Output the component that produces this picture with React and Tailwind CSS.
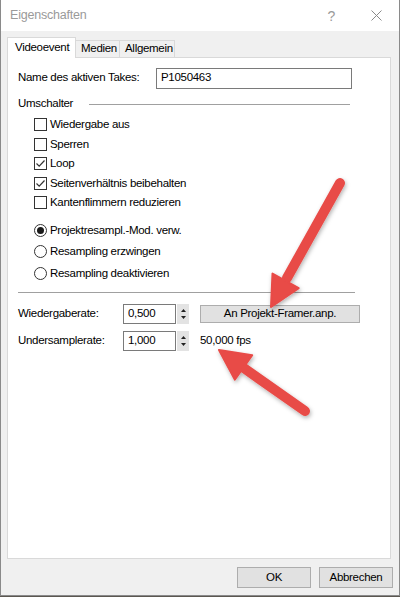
import React from "react";

const Checkbox = ({ checked, label }) => {
    return (
        <div className="h-[19.5px] flex items-center pl-[16px]">
            <div className="w-[13px] h-[13px] border border-[#333] bg-white flex items-center justify-center">
                {checked && (
                    <svg width="11" height="11" viewBox="0 0 11 11">
                        <path d="M1.5 5.5 L4.2 8.2 L9.5 2.5" fill="none" stroke="#333" strokeWidth="1.2" />
                    </svg>
                )}
            </div>
            <span className="ml-[3px]">{label}</span>
        </div>
    )
}

const Radio = ({ checked, label }) => {
    return (
        <div className="h-[21.5px] flex items-center pl-[16px]">
            <div className="w-[13px] h-[13px] rounded-full border border-[#333] bg-white flex items-center justify-center">
                {checked && <div className="w-[7px] h-[7px] rounded-full bg-[#1a1a1a]"></div>}
            </div>
            <span className="ml-[3px]">{label}</span>
        </div>
    )
}

const Spinner = ({ value }) => {
    return (
        <div className="flex h-[20px]">
            <div className="w-[53px] h-[20px] border border-[#7a7a7a] bg-white flex items-center pl-[4px]">{value}</div>
            <div className="w-[12px] h-[20px] ml-[1px] bg-[#e3e3e3] flex flex-col items-center justify-around py-[3px]">
                <svg width="5" height="3" viewBox="0 0 5 3"><path d="M0 3 L2.5 0 L5 3 Z" fill="#222" /></svg>
                <svg width="5" height="3" viewBox="0 0 5 3"><path d="M0 0 L2.5 3 L5 0 Z" fill="#222" /></svg>
            </div>
        </div>
    )
}

const App = () => {
    let toggles = [
        { label: "Wiedergabe aus", checked: false },
        { label: "Sperren", checked: false },
        { label: "Loop", checked: true },
        { label: "Seitenverhältnis beibehalten", checked: true },
        { label: "Kantenflimmern reduzieren", checked: false },
    ];
    let modes = [
        { label: "Projektresampl.-Mod. verw.", checked: true },
        { label: "Resampling erzwingen", checked: false },
        { label: "Resampling deaktivieren", checked: false },
    ];

    return (
        <div className="w-[400px] h-[597px] bg-[#5b5750] font-['Liberation_Sans',sans-serif] text-[11.5px] tracking-[-0.3px] text-black leading-none">
            <div className="relative w-[400px] h-[596px] bg-[#f0f0f0] border-x border-b border-[#8a8a8a] flex flex-col">

                {/* title bar */}
                <div className="h-[31px] bg-white flex items-center pl-[9px] shrink-0">
                    <span className="text-[#9a9a9a] text-[12.5px] tracking-[-0.2px]">Eigenschaften</span>
                    <span className="ml-auto mr-[36px] text-[#9a9a9a] text-[14px]">?</span>
                    <svg className="mr-[17px]" width="11" height="11" viewBox="0 0 11 11">
                        <path d="M0.5 0.5 L10.5 10.5 M10.5 0.5 L0.5 10.5" stroke="#8a8a8a" strokeWidth="1" />
                    </svg>
                </div>

                {/* tabs */}
                <div className="flex items-end ml-[6px] mt-[6px] h-[20px] relative z-10">
                    <div className="h-[21px] w-[69px] bg-white border-x border-t border-[#d9d9d9] flex items-center pl-[7px] mb-[-1px]">Videoevent</div>
                    <div className="h-[17px] w-[44px] border-t border-r border-[#d9d9d9] flex items-center pl-[5px]">Medien</div>
                    <div className="h-[17px] w-[55px] border-t border-r border-[#d9d9d9] flex items-center pl-[5px]">Allgemein</div>
                </div>

                {/* tab panel */}
                <div className="ml-[6px] w-[384px] h-[502px] bg-white border border-[#d9d9d9] pl-[10px]">
                    <div className="flex items-center h-[20px] mt-[10px]">
                        <span>Name des aktiven Takes:</span>
                        <div className="ml-auto mr-[38px] w-[196px] h-[21px] border border-[#7a7a7a] flex items-center pl-[4px]">P1050463</div>
                    </div>

                    <div className="flex items-center h-[16px] mt-[8px]">
                        <span>Umschalter</span>
                        <div className="ml-auto mr-[40px] w-[261px] h-px bg-[#a0a0a0]"></div>
                    </div>

                    <div className="mt-[3px]">
                        {toggles.map((t, i) => <Checkbox key={i} label={t.label} checked={t.checked} />)}
                    </div>

                    <div className="mt-[7px]">
                        {modes.map((m, i) => <Radio key={i} label={m.label} checked={m.checked} />)}
                    </div>

                    <div className="mt-[8px] w-[337px] h-px bg-[#a0a0a0]"></div>

                    <div className="flex items-center h-[20px] mt-[11px]">
                        <span className="w-[105px]">Wiedergaberate:</span>
                        <Spinner value="0,500" />
                        <button className="ml-[11px] w-[160px] h-[18px] bg-[#e1e1e1] border border-[#adadad] flex items-center justify-center">An Projekt-Framer.anp.</button>
                    </div>

                    <div className="flex items-center h-[20px] mt-[7px]">
                        <span className="w-[105px]">Undersamplerate:</span>
                        <Spinner value="1,000" />
                        <span className="ml-[11px]">50,000 fps</span>
                    </div>
                </div>

                {/* dialog buttons */}
                <div className="flex justify-end mt-[8px] mr-[6px] gap-[8px]">
                    <button className="w-[74px] h-[21px] bg-[#e1e1e1] border border-[#adadad] flex items-center justify-center">OK</button>
                    <button className="w-[74px] h-[21px] bg-[#e1e1e1] border border-[#adadad] flex items-center justify-center">Abbrechen</button>
                </div>

                {/* annotation arrows */}
                <svg className="absolute left-[-1px] top-0 pointer-events-none" width="400" height="597" viewBox="0 0 400 597">
                    <defs>
                        <filter id="sh" x="-20%" y="-20%" width="140%" height="140%">
                            <feDropShadow dx="1" dy="2" stdDeviation="2" floodColor="#000" floodOpacity="0.3" />
                        </filter>
                    </defs>
                    <g fill="#e84b47" stroke="#e84b47" filter="url(#sh)">
                        <line x1="340" y1="183" x2="287" y2="278" strokeWidth="10" strokeLinecap="round" />
                        <path d="M271 307 L298.7 288.1 L272.5 273.5 Z" strokeWidth="2" strokeLinejoin="round" />
                        <line x1="305" y1="411" x2="241" y2="366" strokeWidth="10" strokeLinecap="round" />
                        <path d="M219 350 L252.2 355.2 L234.8 379.6 Z" strokeWidth="2" strokeLinejoin="round" />
                    </g>
                </svg>
            </div>
        </div>
    )
}

export default App;
